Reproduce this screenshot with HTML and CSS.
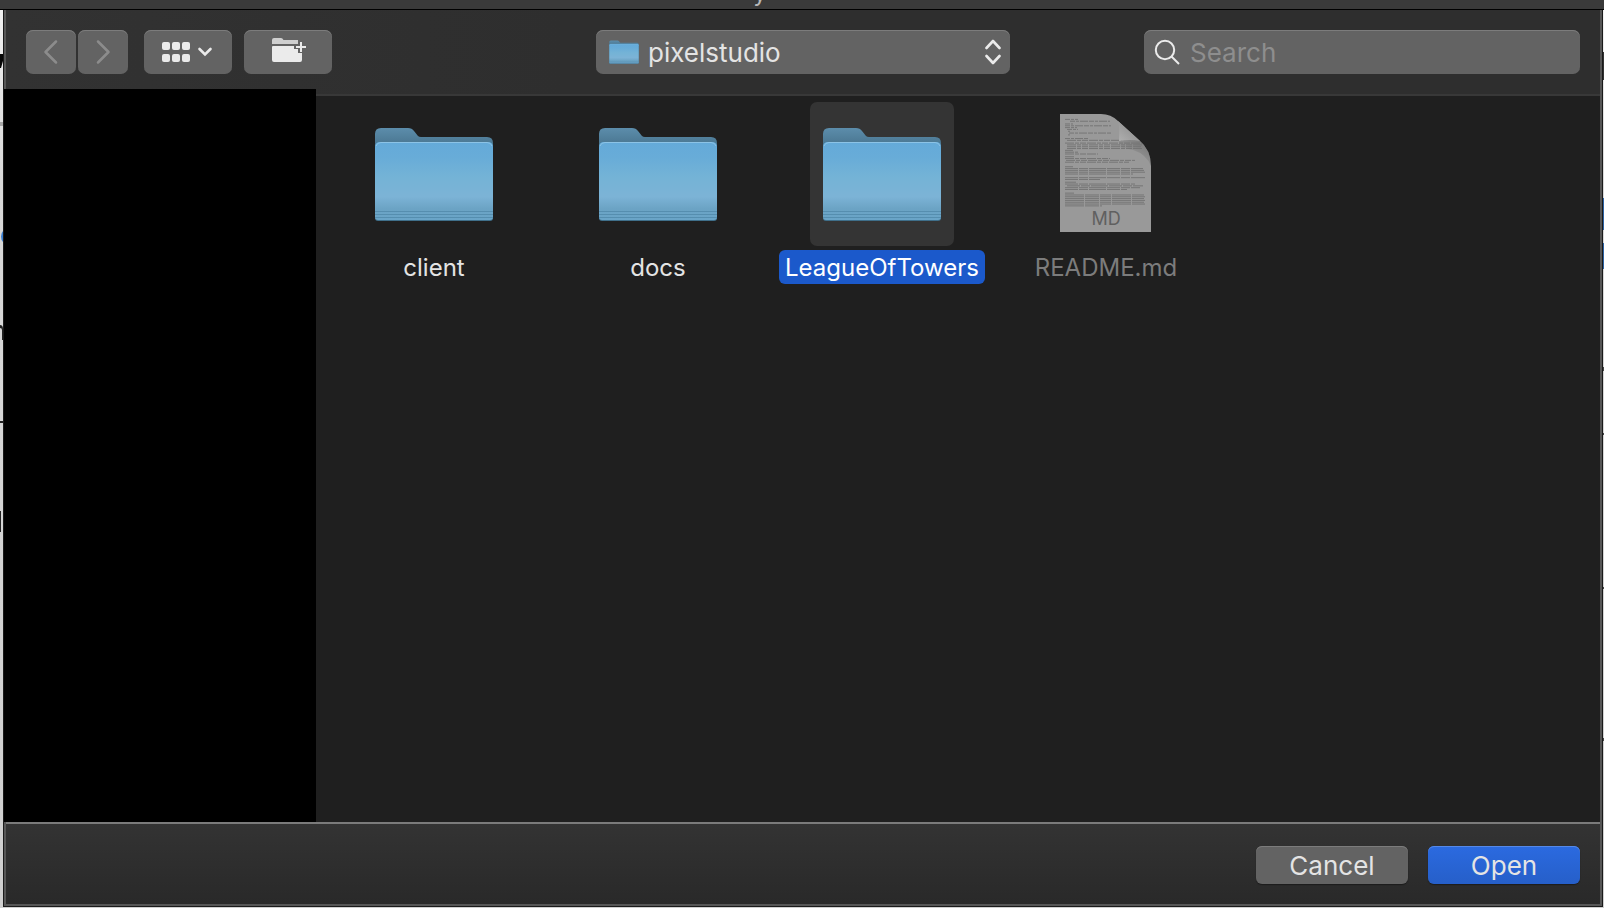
FILE: index.html
```html
<!DOCTYPE html>
<html lang="en">
<head>
<meta charset="utf-8">
<meta name="viewport" content="width=device-width, initial-scale=1">
<title>Open</title>
<link rel="stylesheet" href="styles.css">
</head>
<body>
<svg class="defs" width="0" height="0" aria-hidden="true">
  <defs>
    <linearGradient id="front" x1="0" y1="0" x2="0" y2="1">
      <stop offset="0" stop-color="#64aad9"/>
      <stop offset=".2" stop-color="#68acd8"/>
      <stop offset=".45" stop-color="#74b3d6"/>
      <stop offset=".7" stop-color="#7cb3d6"/>
      <stop offset=".86" stop-color="#6ba3c4"/>
      <stop offset="1" stop-color="#6aa5c8"/>
    </linearGradient>
    <linearGradient id="back" x1="0" y1="0" x2="0" y2="1">
      <stop offset="0" stop-color="#5c8dab"/>
      <stop offset="1" stop-color="#446f89"/>
    </linearGradient>
    <linearGradient id="curl" x1="0" y1="1" x2="1" y2="0">
      <stop offset="0" stop-color="#b0b0b0"/>
      <stop offset=".5" stop-color="#9a9a9a"/>
      <stop offset="1" stop-color="#a8a8a8"/>
    </linearGradient>
    <linearGradient id="shade" gradientUnits="userSpaceOnUse" x1="90" y1="52" x2="100" y2="38">
      <stop offset="0" stop-color="#707070" stop-opacity="0"/>
      <stop offset="1" stop-color="#707070" stop-opacity=".6"/>
    </linearGradient>
    <symbol id="folder" viewBox="0 0 144 144">
      <path d="M13 46V32q0-6 6-6h27q4 0 6 3l4 5q1 1 3 1h66q6 0 6 6v7H13z" fill="url(#back)"/>
      <path d="M13 116V45q0-5 5-5h108q5 0 5 5v71q0 3-3 3H16q-3 0-3-3z" fill="#3f6f8a"/>
      <path d="M13 115V45q0-5 5-5h108q5 0 5 5v70q0 3-3 3H16q-3 0-3-3z" fill="url(#front)"/>
      <path d="M14 44q1-3.500 5-3.500h106q4 0 5 3.500" fill="none" stroke="#8cc3e6"/>
      <path d="M13 109.500h118M13 112.500h118M13 115.500h118" stroke="#4f87a8" opacity=".75"/>
    </symbol>
  </defs>
</svg>

<header class="titlebar"><span>y</span></header>
<svg class="backdrop-marks left" width="3" height="560" viewBox="0 0 3 560" aria-hidden="true">
  <path d="M0 54h3v7L1 68H0z" fill="#080808"/>
  <path d="M0 122h3v4H0z" fill="#a8a8a8"/>
  <path d="M3 231q-2 2-2 5.500t2 5.500z" fill="#3b7fd0"/>
  <path d="M0 325q3 0 3 4v11H2v-10q0-2-2-2zM0 421h3v2H0zM0 511h1v21H0z" fill="#222"/>
</svg>
<svg class="backdrop-marks right" width="1" height="760" viewBox="0 0 1 760" aria-hidden="true">
  <path d="M0 52h1v28H0z" fill="#333"/>
  <path d="M0 198h1v32H0zM0 243h1v26H0z" fill="#2c62a4"/>
  <path d="M0 367h1v4H0zM0 433h1v2H0zM0 587h1v2H0zM0 738h1v3H0z" fill="#444"/>
</svg>

<main class="dialog">
  <div class="toolbar">
    <div class="tools">
      <div class="history">
        <button class="tool nav" type="button" aria-label="Back"><svg width="50" height="44" viewBox="0 0 50 44"><path d="M30 11.500 19.500 22 30 32.500"/></svg></button>
        <button class="tool nav" type="button" aria-label="Forward"><svg width="50" height="44" viewBox="0 0 50 44"><path d="M20 11.500 30.500 22 20 32.500"/></svg></button>
      </div>
      <button class="tool" type="button" aria-label="Icon view">
        <svg width="88" height="44" viewBox="0 0 88 44">
          <g fill="#ebebeb"><rect x="18" y="12" width="8" height="8" rx="2"/><rect x="28" y="12" width="8" height="8" rx="2"/><rect x="38" y="12" width="8" height="8" rx="2"/><rect x="18" y="24" width="8" height="8" rx="2"/><rect x="28" y="24" width="8" height="8" rx="2"/><rect x="38" y="24" width="8" height="8" rx="2"/></g>
          <path d="m55.500 19 5.500 5.500 5.500-5.500" fill="none" stroke="#ebebeb" stroke-width="2.600" stroke-linecap="round"/>
        </svg>
      </button>
      <button class="tool" type="button" aria-label="New folder">
        <svg width="88" height="44" viewBox="0 0 88 44">
          <path d="M28 14V10q0-2 2-2h7q1.500 0 2.500 2H54v4z" fill="#cfcfcf"/>
          <path d="M28 17q0-1 1-1h21v3h4v4h4v7q0 2-2 2H30q-2 0-2-2z" fill="#ebebeb"/>
          <path d="M57 12v10M52 17h10" fill="none" stroke="#ebebeb" stroke-width="2"/>
        </svg>
      </button>
    </div>
    <div class="location">
      <svg class="location-icon" width="36" height="36" viewBox="0 0 144 144" aria-hidden="true"><use href="#folder"/></svg>
      <select aria-label="Location"><option>pixelstudio</option></select>
      <svg class="updown" width="16" height="26" viewBox="0 0 16 26" aria-hidden="true"><path d="m1.500 9 6.500-7 6.500 7m-13 8 6.500 7 6.500-7"/></svg>
    </div>
    <label class="search">
      <svg width="26" height="26" viewBox="0 0 26 26" aria-hidden="true"><circle cx="11" cy="11" r="9.200"/><path d="m17.500 17.500 7.500 7.500"/></svg>
      <input type="search" placeholder="Search" aria-label="Search">
    </label>
  </div>

  <div class="content">
    <aside class="sidebar" aria-label="Sidebar"></aside>
    <section class="files" aria-label="Files">
      <button class="file" type="button"><svg class="thumb" viewBox="0 0 144 144"><use href="#folder"/></svg><span class="name">client</span></button>
      <button class="file" type="button"><svg class="thumb" viewBox="0 0 144 144"><use href="#folder"/></svg><span class="name">docs</span></button>
      <button class="file selected" type="button"><svg class="thumb" viewBox="0 0 144 144"><use href="#folder"/></svg><span class="name">LeagueOfTowers</span></button>
      <button class="file" type="button" disabled>
        <svg class="thumb" viewBox="0 0 144 144">
          <path d="M26 12h41q10 0 17 7l21 19q12 10 12 26v66H26z" fill="#999"/>
          <g fill="none" stroke="#5c5c5c" stroke-width="1" opacity=".6" transform="translate(0 1.500) scale(1 .91)">
            <path stroke-dasharray="5 1 3 1 8 1" d="M31 17.500h13M36 19.500h40M31 22.500h8M31 24.500h46M31 26.500h12M33 28.500h11M34 30.500h2M35 32.500h42M34 34.500h2M31 38.500h23"/>
            <path stroke-dasharray="9 1 4 1 6 1" d="M33 40.500h55M31 43.500h77M33 45.500h76M33 47.500h74M33 49.500h75M31 51.500h8M31 53.500h13M31 55.500h33M31 58.500h10M31 60.500h45M32 62.500h69M31 64.500h64"/>
            <path stroke-dasharray="13 1 9 1 17 1" d="M31 69.500h8M31 71.500h78M31 73.500h79M31 75.500h80M31 77.500h68M31 81.500h80M31 83.500h35M31 86.500h11M31 88.500h70M33 90.500h76M31 92.500h75M31 94.500h62M31 98.500h9"/>
            <path stroke-dasharray="19 1 14 1 11 1" d="M31 100.500h79M31 102.500h80M31 104.500h79M31 106.500h80M31 108.500h79M31 110.500h80M31 112.500h37"/>
          </g>
          <path d="M85 38h20q12 10 12 26-5-12-18-16l-14-3z" fill="url(#shade)"/>
          <path d="M84 19q2 5 1 20 11-2 21 0z" fill="url(#curl)"/>
          <text x="72" y="123">MD</text>
        </svg>
        <span class="name">README.md</span>
      </button>
    </section>
  </div>

  <footer class="actions">
    <button class="action" type="button">Cancel</button>
    <button class="action primary" type="submit">Open</button>
  </footer>
</main>
</body>
</html>
```

FILE: styles.css
```css
* { box-sizing: border-box; }

body {
  margin: 0;
  min-height: 100vh;
  display: flex;
  flex-direction: column;
  background: linear-gradient(#f2f2f2, #d8d8d8 20%, #cfcfcf);
  color: #e4e4e4;
  font-family: Inter, "Liberation Sans", sans-serif;
  font-size: 24px;
}

button, select, input { font: inherit; color: inherit; margin: 0; padding: 0; border: 0; }

.defs { position: absolute; }

.titlebar {
  height: 10px;
  display: flex;
  justify-content: center;
  align-items: flex-end;
  padding-right: 84px;
  overflow: hidden;
  background: #3a3a3a;
  border-bottom: 1px solid #000;
  color: #b8b8b8;
  line-height: 24px;
}

.titlebar span { padding-bottom: 4px; }

.backdrop-marks { position: absolute; top: 0; }
.left { left: 0; }
.right { right: 0; }

.dialog {
  flex: 1;
  display: flex;
  flex-direction: column;
  margin: 0 1px 1px 3px;
  border: solid #1a1a1a;
  border-width: 0 1px 1px;
  background: #565656;
  padding: 0 2px 2px;
}

.toolbar {
  display: grid;
  grid-template-columns: 1fr 414px 1fr;
  align-items: center;
  padding: 20px;
  background: linear-gradient(90deg, #323232, #2e2e2e 35%);
  border-bottom: 2px solid #383838;
}

.tools { display: flex; gap: 12px; }
.history { display: flex; gap: 2px; margin-right: 4px; }

.tool, .location, .search {
  height: 44px;
  border-radius: 7px;
  background: #636363;
  box-shadow: inset 0 1px #7c7c7c;
}

.tool svg { display: block; }
.nav path { fill: none; stroke: #8c8c8c; stroke-width: 2.5; stroke-linecap: round; stroke-linejoin: round; }

.location { display: flex; align-items: center; padding: 0 9px 0 10px; font-size: 26px; }
.location select { flex: 1; height: 44px; padding: 1px 0 0 6px; appearance: none; background: none; outline: 0; }
.updown { margin-left: -16px; pointer-events: none; }
.updown path { fill: none; stroke: #ebebeb; stroke-width: 2.6; stroke-linecap: round; stroke-linejoin: round; }

.search {
  justify-self: end;
  width: 436px;
  display: flex;
  align-items: center;
  gap: 10px;
  padding: 0 10px;
  font-size: 26px;
}

.search svg { fill: none; stroke: #ebebeb; stroke-width: 2; }
.search input { flex: 1; min-width: 0; height: 44px; padding-top: 1px; appearance: none; background: none; outline: 0; }
.search input::placeholder { color: #8e8e8e; opacity: 1; }

.content { flex: 1; display: flex; background: #1f1f1f; }

.sidebar { position: relative; width: 312px; margin: -7px 0 0 -2px; background: #000; }

.files {
  flex: 1;
  display: grid;
  grid-template-columns: repeat(auto-fill, 224px);
  align-content: start;
  padding: 6px;
}

.file { display: flex; flex-direction: column; align-items: center; gap: 4px; background: none; }
.thumb { width: 144px; height: 144px; border-radius: 7px; }
.thumb text { font-size: 18px; text-anchor: middle; fill: #606060; }
.name { padding: 2px 6px 0; border-radius: 6px; line-height: 32px; }
.selected .thumb { background: #343434; }
.selected .name { background: #1b59cb; color: #fff; }
.file:disabled { color: #7c7c7c; }

.actions {
  display: flex;
  justify-content: flex-end;
  gap: 20px;
  padding: 22px 20px 20px;
  border-top: 2px solid #7b7b7b;
  background: linear-gradient(#333, #292929);
  font-size: 26px;
}

.action {
  width: 152px;
  height: 38px;
  border-radius: 6px;
  background: #636363;
  box-shadow: inset 0 1px #7c7c7c, 0 1px 1px #1c1c1c;
}

.action.primary { background: linear-gradient(#2b6ae0, #265fc9); box-shadow: inset 0 1px #5589e8, 0 1px 1px #1c1c1c; }
```
